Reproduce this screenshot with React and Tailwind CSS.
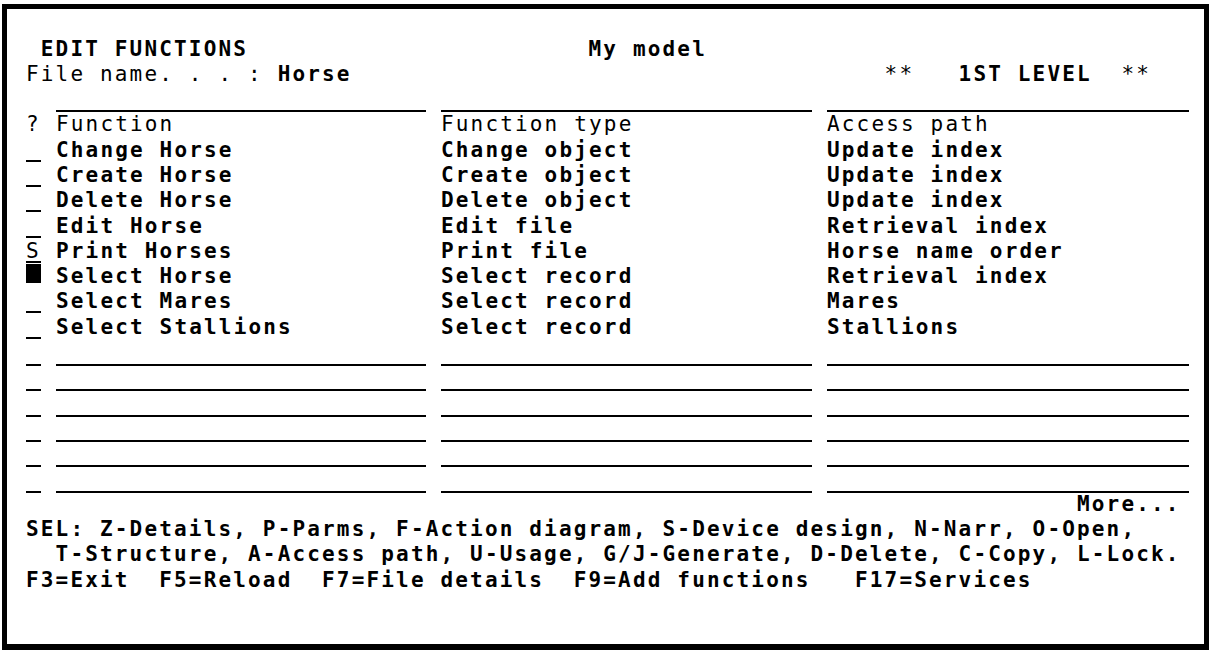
import React from 'react';

const rows = [
    { sel: '_', fn: 'Change Horse', type: 'Change object', path: 'Update index' },
    { sel: '_', fn: 'Create Horse', type: 'Create object', path: 'Update index' },
    { sel: '_', fn: 'Delete Horse', type: 'Delete object', path: 'Update index' },
    { sel: '_', fn: 'Edit Horse', type: 'Edit file', path: 'Retrieval index' },
    { sel: 'S', fn: 'Print Horses', type: 'Print file', path: 'Horse name order' },
    { sel: 'cursor', fn: 'Select Horse', type: 'Select record', path: 'Retrieval index' },
    { sel: '_', fn: 'Select Mares', type: 'Select record', path: 'Mares' },
    { sel: '_', fn: 'Select Stallions', type: 'Select record', path: 'Stallions' },
];

const gridRow = 'grid grid-cols-[15px_370px_371px_362px] gap-x-[15px] h-[25.3px]';

const SelCell = ({ sel }) => {
    if (sel === 'cursor') return <div className="h-[19px] bg-black"></div>;
    return (
        <div className="h-[24px] border-b-2 border-black overflow-visible">
            {sel === 'S' ? 'S' : ''}
        </div>
    );
};

const Line = ({ children }) => <div className="h-[25.3px] whitespace-pre">{children}</div>;

const App = () => (
    <div className="w-[1211px] h-[653px] bg-white pl-[2px] pt-[4px] overflow-hidden">
        <div
            className="w-[1207px] h-[646px] border-[5px] border-b-[6px] border-black pl-[19px] pt-[27.5px] text-black text-[21px] leading-[25.3px] tracking-[2.16px]"
            style={{ fontFamily: '"DejaVu Sans Mono", "Liberation Mono", monospace' }}
        >
            <Line>
                <span className="font-bold">{' EDIT FUNCTIONS                       My model'}</span>
            </Line>
            <Line>
                {'File name. . . : '}
                <span className="font-bold">Horse</span>
                {'                                    **   '}
                <span className="font-bold">1ST LEVEL</span>
                {'  **'}
            </Line>
            <div className={gridRow}>
                <div></div>
                <div className="h-[25px] border-b-2 border-black"></div>
                <div className="h-[25px] border-b-2 border-black"></div>
                <div className="h-[25px] border-b-2 border-black"></div>
            </div>
            <div className={gridRow}>
                <div>?</div>
                <div>Function</div>
                <div>Function type</div>
                <div>Access path</div>
            </div>
            {rows.map((r, i) => (
                <div key={i} className={gridRow}>
                    <SelCell sel={r.sel} />
                    <div className="font-bold whitespace-pre">{r.fn}</div>
                    <div className="font-bold whitespace-pre">{r.type}</div>
                    <div className="font-bold whitespace-pre">{r.path}</div>
                </div>
            ))}
            {[0, 1, 2, 3, 4, 5].map((i) => (
                <div key={i} className={gridRow}>
                    <div className="h-[26px] border-b-2 border-black"></div>
                    <div className="h-[26px] border-b-2 border-black"></div>
                    <div className="h-[26px] border-b-2 border-black"></div>
                    <div className="h-[26px] border-b-2 border-black"></div>
                </div>
            ))}
            <Line>
                <span className="font-bold">{'                                                                       More...'}</span>
            </Line>
            <div className="font-bold">
                <Line>SEL: Z-Details, P-Parms, F-Action diagram, S-Device design, N-Narr, O-Open,</Line>
                <Line>{'  T-Structure, A-Access path, U-Usage, G/J-Generate, D-Delete, C-Copy, L-Lock.'}</Line>
                <Line>{'F3=Exit  F5=Reload  F7=File details  F9=Add functions   F17=Services'}</Line>
            </div>
        </div>
    </div>
);

export default App;
